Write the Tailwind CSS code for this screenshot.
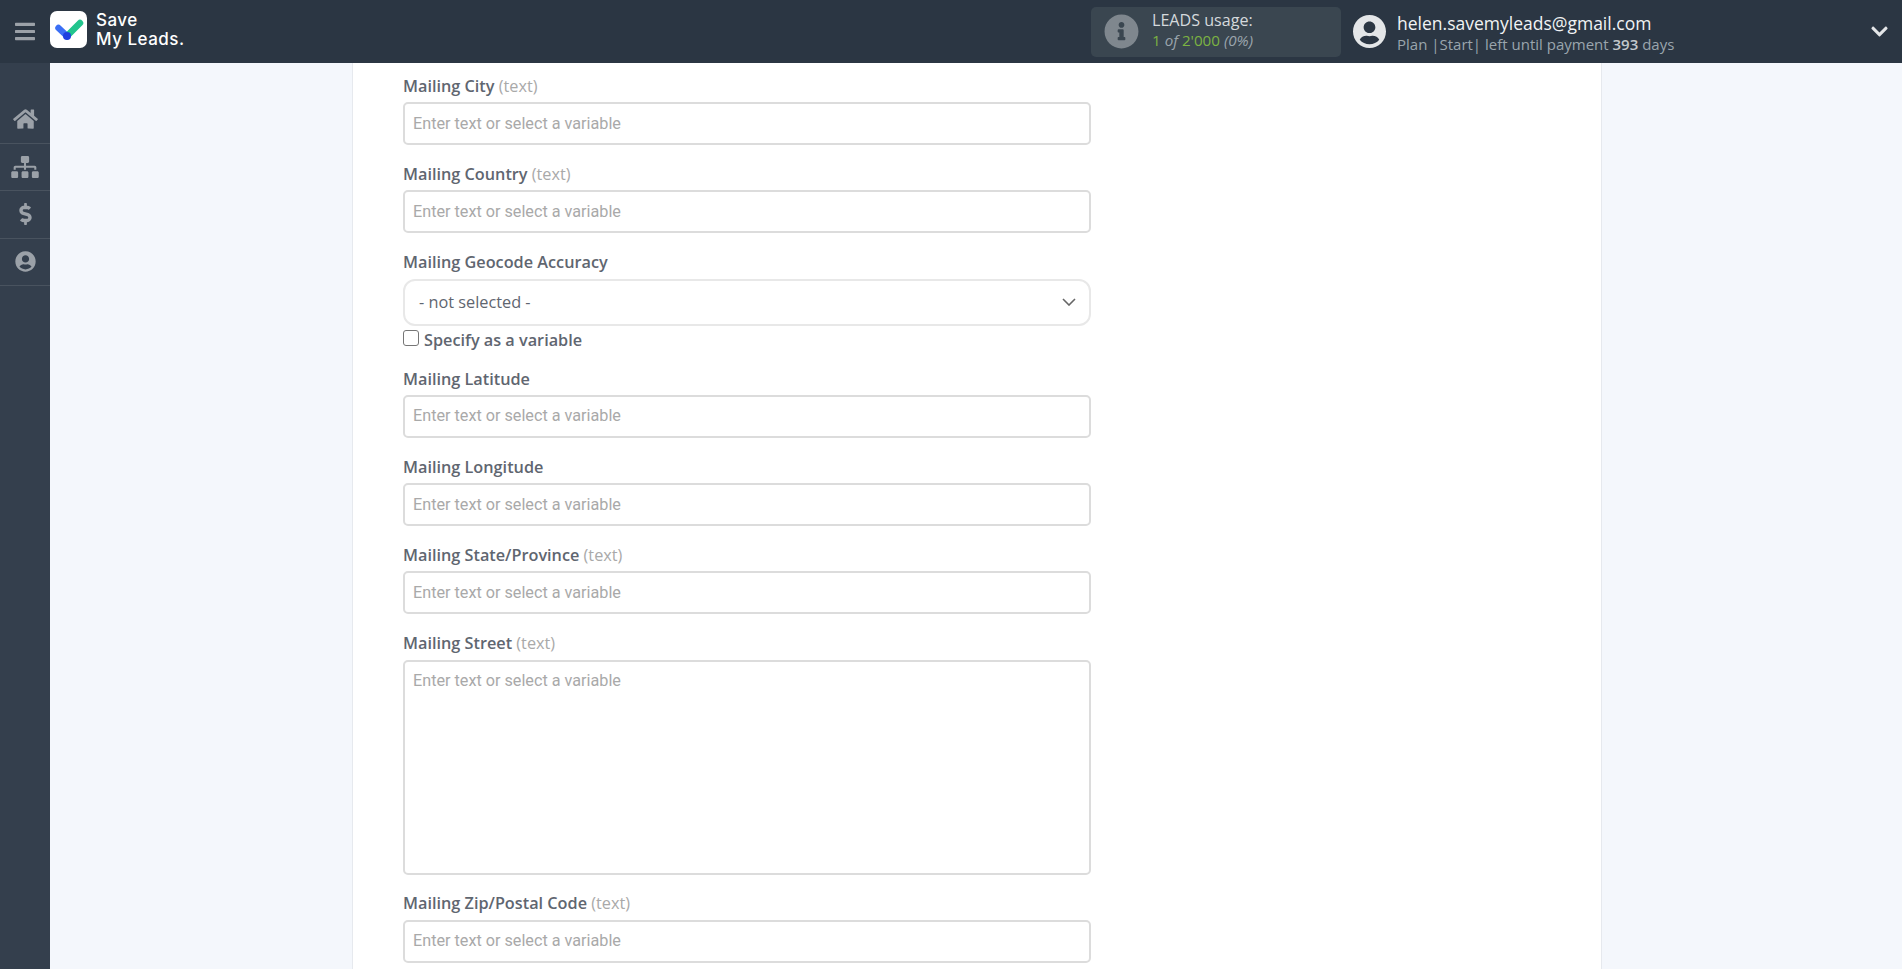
<!DOCTYPE html>
<html lang="en">
<head>
  <meta charset="utf-8"/>
  <title>Save My Leads</title>
  <script src="https://cdn.jsdelivr.net/npm/@tailwindcss/browser@4"></script>
</head>
<body class="h-screen overflow-hidden flex flex-col bg-[#f4f7fc] font-['Open_Sans',sans-serif]">

  <!-- Header -->
  <header class="h-[63px] shrink-0 bg-[#2b3643] flex items-center">
    <div class="w-[50px] flex justify-center">
      <svg class="w-[20px] h-[23px] fill-[#9ba1a8]" viewBox="0 0 448 512"><path d="M16 132h416c8.837 0 16-7.163 16-16V76c0-8.837-7.163-16-16-16H16C7.163 60 0 67.163 0 76v40c0 8.837 7.163 16 16 16zm0 160h416c8.837 0 16-7.163 16-16v-40c0-8.837-7.163-16-16-16H16c-8.837 0-16 7.163-16 16v40c0 8.837 7.163 16 16 16zm0 160h416c8.837 0 16-7.163 16-16v-40c0-8.837-7.163-16-16-16H16c-8.837 0-16 7.163-16 16v40c0 8.837 7.163 16 16 16z"/></svg>
    </div>
    <div class="w-[37px] h-[37px] -mt-[4px] rounded-[7px] bg-white flex items-center justify-center">
      <svg class="w-[30px] h-[24px]" viewBox="0 0 30 24">
        <path d="M4.5 10 L13 18" stroke="#3b6ff5" stroke-width="6.5" stroke-linecap="round" fill="none"/>
        <path d="M13 18 L26 5" stroke="#21c48d" stroke-width="6.5" stroke-linecap="round" fill="none"/>
        <circle cx="13" cy="18" r="4" fill="#1e3fe0"/>
      </svg>
    </div>
    <div class="ml-[9px] w-[100px] -mt-[4px] text-white text-[17px] leading-[19px] font-medium font-['Inter',sans-serif] tracking-[0.5px]">Save<br/>My Leads.</div>

    <div class="ml-[895px] w-[250px] h-[50px] rounded-[5px] bg-[#3a4650] flex items-center pl-[13px]">
      <svg class="w-[35px] h-[35px] fill-[#7f878e]" viewBox="0 0 512 512"><path d="M256 8C119.043 8 8 119.083 8 256c0 136.997 111.043 248 248 248s248-111.003 248-248C504 119.083 392.957 8 256 8zm0 110c23.196 0 42 18.804 42 42s-18.804 42-42 42-42-18.804-42-42 18.804-42 42-42zm56 254c0 6.627-5.373 12-12 12h-88c-6.627 0-12-5.373-12-12v-24c0-6.627 5.373-12 12-12h12v-64h-12c-6.627 0-12-5.373-12-12v-24c0-6.627 5.373-12 12-12h64c6.627 0 12 5.373 12 12v100h12c6.627 0 12 5.373 12 12v24z"/></svg>
      <div class="ml-[13px] mb-[3px]">
        <div class="text-[#d5d9dc] text-[16.1px] leading-[20px]">LEADS usage:</div>
        <div class="text-[#9aa5ad] text-[15.2px] leading-[21px]"><span class="text-[#7cb342]">1</span> <i>of</i> <span class="text-[#7cb342]">2'000</span> <i>(0%)</i></div>
      </div>
    </div>

    <svg class="ml-[12px] w-[33px] h-[35px] fill-[#e4e6e8]" viewBox="0 0 496 512"><path d="M248 8C111 8 0 119 0 256s111 248 248 248 248-111 248-248S385 8 248 8zm0 96c48.6 0 88 39.4 88 88s-39.4 88-88 88-88-39.4-88-88 39.4-88 88-88zm0 344c-58.7 0-111.3-26.6-146.5-68.2 18.8-35.4 55.6-59.8 98.5-59.8 2.4 0 4.8.4 7.1 1.1 13 4.2 26.6 6.9 40.9 6.9 14.3 0 28-2.7 40.9-6.9 2.3-.7 4.7-1.1 7.1-1.1 42.9 0 79.7 24.4 98.5 59.8C359.3 421.4 306.7 448 248 448z"/></svg>
    <div class="ml-[11px] mt-[2px]">
      <div class="text-[#f1f3f4] text-[17.5px] leading-[22px]">helen.savemyleads@gmail.com</div>
      <div class="text-[#9aa5ad] text-[15px] leading-[20px]">Plan |Start| left until payment <b class="text-[#c3c8cc] font-semibold">393</b> days</div>
    </div>

    <svg class="ml-auto mr-[14px] w-[17px] h-[19px] fill-[#e4e6e8]" viewBox="0 0 448 512"><path d="M207.029 381.476L12.686 187.132c-9.373-9.373-9.373-24.569 0-33.941l22.667-22.667c9.357-9.357 24.522-9.375 33.901-.04L224 284.505l154.745-154.021c9.379-9.335 24.544-9.317 33.901.04l22.667 22.667c9.373 9.373 9.373 24.569 0 33.941L240.971 381.476c-9.373 9.372-24.569 9.372-33.942 0z"/></svg>
  </header>

  <div class="flex-1 flex min-h-0">

    <!-- Sidebar -->
    <nav class="w-[50px] shrink-0 bg-[#343f4d] pt-[33px]">
      <a href="#" class="h-[47.5px] flex items-center justify-center border-b border-b-[#49535f]">
        <svg class="w-[25px] h-[22px] fill-[#9ba1a8]" viewBox="0 0 576 512"><path d="M280.37 148.26L96 300.11V464a16 16 0 0 0 16 16l112.06-.29a16 16 0 0 0 15.92-16V368a16 16 0 0 1 16-16h64a16 16 0 0 1 16 16v95.64a16 16 0 0 0 16 16.05L464 480a16 16 0 0 0 16-16V300L295.67 148.26a12.19 12.19 0 0 0-15.3 0zM571.6 251.47L488 182.56V44.05a12 12 0 0 0-12-12h-56a12 12 0 0 0-12 12v72.61L318.47 43a48 48 0 0 0-61 0L4.34 251.47a12 12 0 0 0-1.6 16.9l25.5 31A12 12 0 0 0 45.15 301l235.22-193.74a12.19 12.19 0 0 1 15.3 0L530.9 301a12 12 0 0 0 16.9-1.6l25.5-31a12 12 0 0 0-1.7-16.93z"/></svg>
      </a>
      <a href="#" class="h-[47.5px] flex items-center justify-center border-b border-b-[#49535f]">
        <svg class="w-[28px] h-[22px] fill-[#9ba1a8]" viewBox="0 0 640 512"><path d="M128 352H32c-17.67 0-32 14.33-32 32v96c0 17.67 14.33 32 32 32h96c17.67 0 32-14.33 32-32v-96c0-17.67-14.33-32-32-32zm-24-80h192v48h48v-48h192v48h48v-57.59c0-21.17-17.23-38.41-38.41-38.41H344v-64h40c17.67 0 32-14.33 32-32V32c0-17.67-14.33-32-32-32H256c-17.67 0-32 14.33-32 32v96c0 17.67 14.33 32 32 32h40v64H94.41C73.23 224 56 241.23 56 262.41V320h48v-48zm264 80h-96c-17.67 0-32 14.33-32 32v96c0 17.67 14.33 32 32 32h96c17.67 0 32-14.33 32-32v-96c0-17.67-14.33-32-32-32zm240 0h-96c-17.67 0-32 14.33-32 32v96c0 17.67 14.33 32 32 32h96c17.67 0 32-14.33 32-32v-96c0-17.67-14.33-32-32-32z"/></svg>
      </a>
      <a href="#" class="h-[47.5px] flex items-center justify-center border-b border-b-[#49535f]">
        <svg class="w-[13px] h-[22px] fill-[#9ba1a8]" viewBox="0 0 288 512"><path d="M209.2 233.4l-108-31.6C88.7 198.2 80 186.5 80 173.5c0-16.3 13.2-29.5 29.5-29.5h66.3c12.2 0 24.2 3.7 34.2 10.5 6.1 4.1 14.3 3.1 19.5-2l34.8-34c7.1-6.9 6.1-18.4-1.8-24.5C238 74.8 207.4 64.1 176 64V16c0-8.8-7.2-16-16-16h-32c-8.8 0-16 7.2-16 16v48h-2.5C45.8 64-5.4 118.7.5 183.6c4.2 46.1 39.4 83.6 83.8 96.6l102.5 30c12.5 3.7 21.2 15.3 21.2 28.3 0 16.3-13.2 29.5-29.5 29.5h-66.3C100 368 88 364.3 78 357.5c-6.1-4.1-14.3-3.1-19.5 2l-34.8 34c-7.1 6.9-6.1 18.4 1.8 24.5 24.5 19.2 55.1 29.9 86.5 30v48c0 8.8 7.2 16 16 16h32c8.8 0 16-7.2 16-16v-48.2c46.6-.9 90.3-28.6 105.7-72.7 21.5-61.6-14.6-124.8-72.5-141.7z"/></svg>
      </a>
      <a href="#" class="h-[47.5px] flex items-center justify-center border-b border-b-[#49535f]">
        <svg class="w-[21px] h-[21px] fill-[#9ba1a8]" viewBox="0 0 496 512"><path d="M248 8C111 8 0 119 0 256s111 248 248 248 248-111 248-248S385 8 248 8zm0 96c48.6 0 88 39.4 88 88s-39.4 88-88 88-88-39.4-88-88 39.4-88 88-88zm0 344c-58.7 0-111.3-26.6-146.5-68.2 18.8-35.4 55.6-59.8 98.5-59.8 2.4 0 4.8.4 7.1 1.1 13 4.2 26.6 6.9 40.9 6.9 14.3 0 28-2.7 40.9-6.9 2.3-.7 4.7-1.1 7.1-1.1 42.9 0 79.7 24.4 98.5 59.8C359.3 421.4 306.7 448 248 448z"/></svg>
      </a>
    </nav>

    <!-- Main -->
    <main class="flex-1 min-w-0 pl-[302px] pr-[300px] overflow-hidden">
      <div class="h-full bg-white border-x border-x-[#e6e9ee] pl-[50px] pt-[13px]">
        <div class="w-[688px]">

          <label class="block h-[21px] mb-[5px] text-[16.25px] leading-[21px] font-semibold text-[#5f6670]">Mailing City <span class="font-normal text-[#a9a9a9]">(text)</span></label>
          <div class="h-[43px] mb-[19px] border-2 border-[#dcdcdc] rounded-[5px] pl-[8px] pt-[1px] flex items-center text-[16.2px] text-[#a9a9a9] font-['Roboto',sans-serif]">Enter text or select a variable</div>

          <label class="block h-[21px] mb-[5px] text-[16.25px] leading-[21px] font-semibold text-[#5f6670]">Mailing Country <span class="font-normal text-[#a9a9a9]">(text)</span></label>
          <div class="h-[43px] mb-[19px] border-2 border-[#dcdcdc] rounded-[5px] pl-[8px] pt-[1px] flex items-center text-[16.2px] text-[#a9a9a9] font-['Roboto',sans-serif]">Enter text or select a variable</div>

          <label class="block h-[21px] mb-[6px] text-[16.25px] leading-[21px] font-semibold text-[#5f6670]">Mailing Geocode Accuracy</label>
          <div class="h-[46.5px] border-2 border-[#e8e8e8] rounded-[12px] pl-[14px] pr-[13px] flex items-center justify-between text-[16.3px] text-[#5f6670]">
            <span>- not selected -</span>
            <svg class="w-[14px] h-[8px]" viewBox="0 0 14 8"><path d="M1 1l6 6 6-6" fill="none" stroke="#666" stroke-width="1.6"/></svg>
          </div>
          <label class="h-[22px] mt-[3.5px] mb-[18px] flex items-center text-[16.25px] font-semibold text-[#5f6670]">
            <span class="w-[16px] h-[16px] mr-[5px] border border-[#767676] rounded-[3px] bg-white -mt-[4px]"></span>Specify as a variable
          </label>

          <label class="block h-[21px] mb-[5px] text-[16.25px] leading-[21px] font-semibold text-[#5f6670]">Mailing Latitude</label>
          <div class="h-[43px] mb-[19px] border-2 border-[#dcdcdc] rounded-[5px] pl-[8px] flex items-center text-[16.2px] text-[#a9a9a9] font-['Roboto',sans-serif]">Enter text or select a variable</div>

          <label class="block h-[21px] mb-[5px] text-[16.25px] leading-[21px] font-semibold text-[#5f6670]">Mailing Longitude</label>
          <div class="h-[43px] mb-[19px] border-2 border-[#dcdcdc] rounded-[5px] pl-[8px] pt-[1px] flex items-center text-[16.2px] text-[#a9a9a9] font-['Roboto',sans-serif]">Enter text or select a variable</div>

          <label class="block h-[21px] mb-[5px] text-[16.25px] leading-[21px] font-semibold text-[#5f6670]">Mailing State/Province <span class="font-normal text-[#a9a9a9]">(text)</span></label>
          <div class="h-[43px] mb-[19px] border-2 border-[#dcdcdc] rounded-[5px] pl-[8px] pt-[1px] flex items-center text-[16.2px] text-[#a9a9a9] font-['Roboto',sans-serif]">Enter text or select a variable</div>

          <label class="block h-[21px] mb-[6px] text-[16.25px] leading-[21px] font-semibold text-[#5f6670]">Mailing Street <span class="font-normal text-[#a9a9a9]">(text)</span></label>
          <div class="h-[215px] mb-[18px] border-2 border-[#dcdcdc] rounded-[5px] pl-[8px] pt-[8px] text-[16.2px] leading-[22px] text-[#a9a9a9] font-['Roboto',sans-serif]">Enter text or select a variable</div>

          <label class="block h-[21px] mb-[6px] text-[16.25px] leading-[21px] font-semibold text-[#5f6670]">Mailing Zip/Postal Code <span class="font-normal text-[#a9a9a9]">(text)</span></label>
          <div class="h-[43px] border-2 border-[#dcdcdc] rounded-[5px] pl-[8px] flex items-center text-[16.2px] text-[#a9a9a9] font-['Roboto',sans-serif]">Enter text or select a variable</div>

        </div>
      </div>
    </main>
  </div>
</body>
</html>
